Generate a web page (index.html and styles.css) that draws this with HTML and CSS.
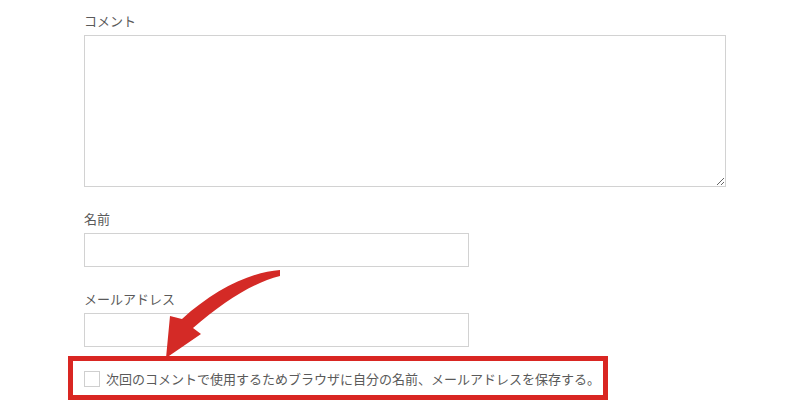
FILE: index.html
```html
<!DOCTYPE html>
<html lang="ja">
<head>
  <meta charset="UTF-8">
  <meta name="viewport" content="width=device-width, initial-scale=1.0">
  <title>コメント</title>
  <link rel="stylesheet" href="styles.css">
</head>
<body>
  <form class="comment-form">
    <div class="field">
      <label for="comment">コメント</label>
      <textarea id="comment" class="comment-box"></textarea>
    </div>
    <div class="field">
      <label for="author">名前</label>
      <input id="author" class="text-input" type="text">
    </div>
    <div class="field">
      <label for="email">メールアドレス</label>
      <input id="email" class="text-input" type="email">
    </div>
    <div class="cookies-consent">
      <input id="cookies" class="check" type="checkbox">
      <label for="cookies">次回のコメントで使用するためブラウザに自分の名前、メールアドレスを保存する。</label>
    </div>
  </form>

  <!-- callout arrow pointing at the checkbox -->
  <svg class="callout" width="800" height="412" viewBox="0 0 800 412">
    <path d="M280,270 C250,272 214,290 182,319 L170,316 L166,358 L201,334 L193,328 C223,302 252,283 280,276 Z" fill="#d42a26"/>
  </svg>
</body>
</html>
```

FILE: styles.css
```css
body {
  margin: 0;
  padding: 0;
  background-color: #fff;
  font-family: "Noto Sans CJK JP", "Liberation Sans", sans-serif;
  color: #5a5a5a;
}

.comment-form {
  padding: 12px 74px 0 84px;
}

.field {
  margin-bottom: 23px;
}

.field label {
  display: block;
  font-size: 13px;
  line-height: 18px;
  margin-bottom: 5px;
}

.comment-box,
.text-input {
  display: block;
  box-sizing: border-box;
  border: 1px solid #d2d2d2;
  background-color: #fff;
  margin: 0;
  font-family: inherit;
}

.comment-box {
  width: 642px;
  height: 152px;
}

.text-input {
  width: 385px;
  height: 34px;
}

.cookies-consent {
  display: flex;
  align-items: center;
  gap: 6px;
  box-sizing: border-box;
  width: 540px;
  height: 44px;
  margin: -14px 0 0 -16px;
  padding: 1px 11px 0;
  border: 5px solid #d92622;
  font-size: 13px;
  white-space: nowrap;
}

.check {
  appearance: none;
  flex: none;
  width: 16px;
  height: 16px;
  margin: 0;
  border: 1px solid #cfcfcf;
  background-color: #fff;
}

.callout {
  position: absolute;
  left: 0;
  top: 0;
  pointer-events: none;
}
```
